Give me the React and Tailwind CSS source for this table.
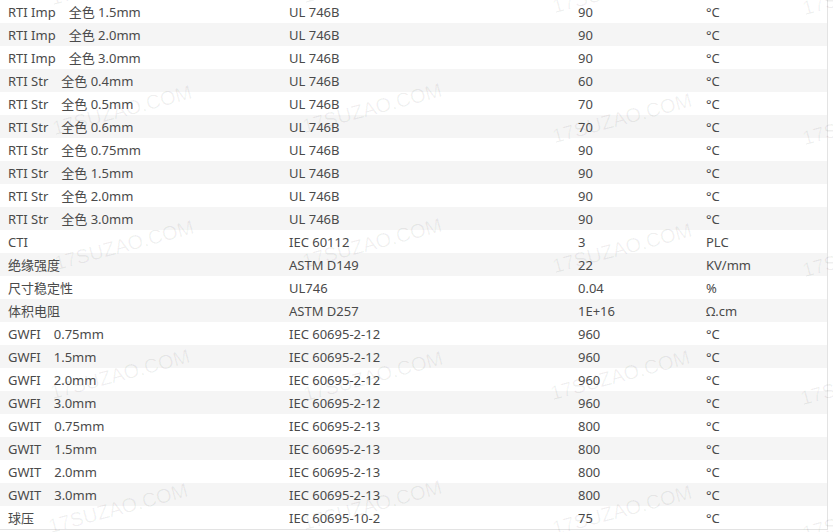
import React from 'react';

const rows = [
  ['RTI Imp　全色 1.5mm', 'UL 746B', '90', '°C'],
  ['RTI Imp　全色 2.0mm', 'UL 746B', '90', '°C'],
  ['RTI Imp　全色 3.0mm', 'UL 746B', '90', '°C'],
  ['RTI Str　全色 0.4mm', 'UL 746B', '60', '°C'],
  ['RTI Str　全色 0.5mm', 'UL 746B', '70', '°C'],
  ['RTI Str　全色 0.6mm', 'UL 746B', '70', '°C'],
  ['RTI Str　全色 0.75mm', 'UL 746B', '90', '°C'],
  ['RTI Str　全色 1.5mm', 'UL 746B', '90', '°C'],
  ['RTI Str　全色 2.0mm', 'UL 746B', '90', '°C'],
  ['RTI Str　全色 3.0mm', 'UL 746B', '90', '°C'],
  ['CTI', 'IEC 60112', '3', 'PLC'],
  ['绝缘强度', 'ASTM D149', '22', 'KV/mm'],
  ['尺寸稳定性', 'UL746', '0.04', '%'],
  ['体积电阻', 'ASTM D257', '1E+16', 'Ω.cm'],
  ['GWFI　0.75mm', 'IEC 60695-2-12', '960', '°C'],
  ['GWFI　1.5mm', 'IEC 60695-2-12', '960', '°C'],
  ['GWFI　2.0mm', 'IEC 60695-2-12', '960', '°C'],
  ['GWFI　3.0mm', 'IEC 60695-2-12', '960', '°C'],
  ['GWIT　0.75mm', 'IEC 60695-2-13', '800', '°C'],
  ['GWIT　1.5mm', 'IEC 60695-2-13', '800', '°C'],
  ['GWIT　2.0mm', 'IEC 60695-2-13', '800', '°C'],
  ['GWIT　3.0mm', 'IEC 60695-2-13', '800', '°C'],
  ['球压', 'IEC 60695-10-2', '75', '°C'],
];

// watermark spots (center points)
const marks = [
  'left-[120px] top-[-20px]', 'left-[372px] top-[-22px]', 'left-[622px] top-[-12px]', 'left-[872px] top-[-10px]',
  'left-[122px] top-[110px]', 'left-[372px] top-[108px]', 'left-[622px] top-[118px]', 'left-[872px] top-[120px]',
  'left-[124px] top-[245px]', 'left-[372px] top-[243px]', 'left-[622px] top-[248px]', 'left-[872px] top-[252px]',
  'left-[120px] top-[374px]', 'left-[373px] top-[376px]', 'left-[620px] top-[375px]', 'left-[870px] top-[380px]',
  'left-[118px] top-[508px]', 'left-[372px] top-[505px]', 'left-[622px] top-[510px]', 'left-[872px] top-[515px]',
];

export default function App() {
  return (
    <div className="relative w-[833px] h-[532px] overflow-hidden bg-white font-['Noto_Sans','Noto_Sans_CJK_SC',sans-serif] text-[13px] text-[#4a4a4a]">
      <table className="w-[828px] table-fixed border-collapse border-r border-b border-[#e3e3e3]">
        <colgroup>
          <col className="w-[281px]" />
          <col className="w-[289px]" />
          <col className="w-[128px]" />
          <col />
        </colgroup>
        <tbody>
          {rows.map((r, i) => (
            <tr key={i} className={i % 2 === 1 ? 'bg-[#f5f5f5]' : 'bg-white'}>
              {r.map((c, j) => (
                <td key={j} className="h-[23px] p-0 pt-px pl-2 leading-[22px] whitespace-pre">
                  {c}
                </td>
              ))}
            </tr>
          ))}
        </tbody>
      </table>

      <div className="pointer-events-none absolute inset-0">
        {marks.map((m, i) => (
          <span
            key={i}
            className={`absolute ${m} -translate-x-1/2 -translate-y-1/2 -rotate-15 whitespace-nowrap font-['Liberation_Sans',sans-serif] text-[20px] leading-none text-black/[0.06]`}
          >
            17SUZAO.COM
          </span>
        ))}
      </div>
    </div>
  );
}
